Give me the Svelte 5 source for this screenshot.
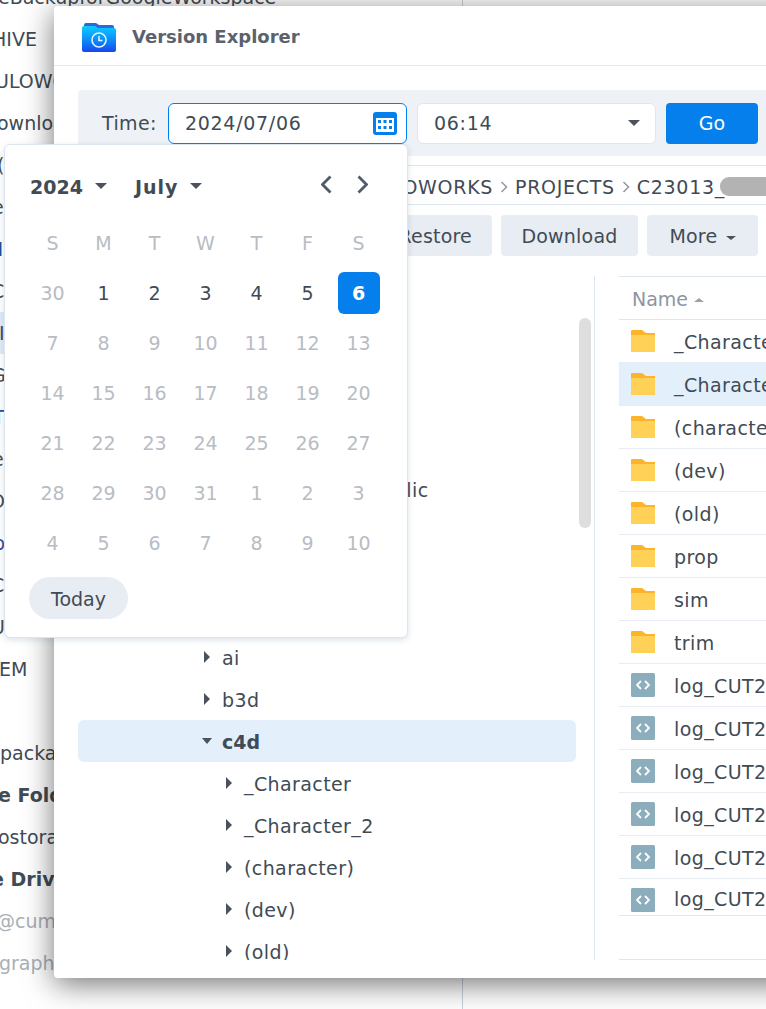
<script lang="ts">
	// behind-window list: only what shows left of the dialog is real text
	const behind = [
		{ t: 'eBackupforGoogleWorkspace', off: -2 },
		{ t: 'HIVE', off: -8 },
		{ t: 'ULOWORKS', off: -5 },
		{ t: 'ownloads', off: -3 },
		{ t: '(', off: -3 },
		{ t: 'e', off: -8 },
		{ t: 'N', off: -11, blue: true },
		{ t: 'C', off: -9 },
		{ t: 'I', off: -1, sel: true },
		{ t: 'G', off: -9 },
		{ t: 'T', off: -7, blue: true },
		{ t: 'e', off: -8 },
		{ t: 'O', off: -10 },
		{ t: 'b', off: -7, blue: true },
		{ t: 'C', off: -9 },
		{ t: 'U', off: -9 },
		{ t: 'EM', off: -1 },
		{ t: '', off: 0 },
		{ t: 'package', off: 0 },
		{ t: 'e Folder', off: -2, bold: true },
		{ t: 'ostorage', off: -2 },
		{ t: 'e Drive', off: -9, bold: true },
		{ t: '@cumulus', off: -4, muted: true },
		{ t: 'graphics', off: -1, muted: true }
	];

	const weekdays = ['S', 'M', 'T', 'W', 'T', 'F', 'S'];

	const days = [
		[30, 1, 2, 3, 4, 5, 6],
		[7, 8, 9, 10, 11, 12, 13],
		[14, 15, 16, 17, 18, 19, 20],
		[21, 22, 23, 24, 25, 26, 27],
		[28, 29, 30, 31, 1, 2, 3],
		[4, 5, 6, 7, 8, 9, 10]
	];

	const isActive = (row: number, col: number) => row === 0 && col > 0;

	// indent is measured from the tree panel's left edge
	const tree = [
		{ label: '', indent: 126 },
		{ label: '', indent: 126 },
		{ label: '', indent: 126 },
		{ label: '', indent: 126 },
		{ label: 'public', indent: 273, noArrow: true },
		{ label: '', indent: 126 },
		{ label: '', indent: 126 },
		{ label: '', indent: 126 },
		{ label: 'ai', indent: 126 },
		{ label: 'b3d', indent: 126 },
		{ label: 'c4d', indent: 126, open: true },
		{ label: '_Character', indent: 148 },
		{ label: '_Character_2', indent: 148 },
		{ label: '(character)', indent: 148 },
		{ label: '(dev)', indent: 148 },
		{ label: '(old)', indent: 148 }
	];

	const folders = ['_Character', '_Character_2', '(character)', '(dev)', '(old)', 'prop', 'sim', 'trim'];
	const logCount = 6;
</script>

<div class="desktop">
	<div class="behind">
		{#each behind as row}
			<div class="behind-row" class:sel={row.sel} class:bold={row.bold} class:muted={row.muted} class:blue={row.blue}>
				<span style="margin-left: {row.off}px">{row.t}</span>
			</div>
		{/each}
	</div>

	<section class="window">
		<header class="title-bar">
			<svg class="logo" width="34" height="32" viewBox="0 0 34 32" aria-hidden="true">
				<defs>
					<linearGradient id="folder-grad" x1="0" y1="0" x2="0" y2="1">
						<stop offset="0" stop-color="#0ccbff" />
						<stop offset="0.55" stop-color="#0a8cf8" />
						<stop offset="1" stop-color="#1a45ee" />
					</linearGradient>
				</defs>
				<path d="M2 4a2 2 0 0 1 2-2h10l3 2h13a2 2 0 0 1 2 2v4H2z" fill="#2a67e2" />
				<path d="M0 7a2 2 0 0 1 2-2h11l3 2h16a2 2 0 0 1 2 2v20a2 2 0 0 1-2 2H2a2 2 0 0 1-2-2z" fill="url(#folder-grad)" />
				<circle cx="17" cy="19" r="7" fill="none" stroke="#e4f4ff" stroke-width="1.6" />
				<path d="M17 15v4.5h3.5" fill="none" stroke="#e4f4ff" stroke-width="1.5" />
			</svg>
			<h1>Version Explorer</h1>
		</header>

		<div class="time-bar">
			<span class="time-label">Time:</span>
			<div class="field date-field">
				<span>2024/07/06</span>
				<svg width="24" height="23" viewBox="0 0 24 23" aria-hidden="true">
					<rect width="24" height="23" rx="3" fill="#057fec" />
					<rect x="3" y="6" width="18" height="14" fill="#fff" />
					<g fill="#057fec">
						<rect x="5" y="8" width="3" height="3" /><rect x="10.500" y="8" width="3" height="3" /><rect x="16" y="8" width="3" height="3" />
						<rect x="5" y="14" width="3" height="3" /><rect x="10.500" y="14" width="3" height="3" /><rect x="16" y="14" width="3" height="3" />
					</g>
				</svg>
			</div>
			<div class="field time-field">
				<span>06:14</span>
				<i class="caret big"></i>
			</div>
			<button class="go">Go</button>
		</div>

		<nav class="crumbs">
			<span>WORKFLOWORKS</span>
			<svg width="8" height="12" viewBox="0 0 8 12" aria-hidden="true"><path d="M1.500 1l5 5-5 5" fill="none" stroke="#8f98a3" stroke-width="1.500" /></svg>
			<span>PROJECTS</span>
			<svg width="8" height="12" viewBox="0 0 8 12" aria-hidden="true"><path d="M1.500 1l5 5-5 5" fill="none" stroke="#8f98a3" stroke-width="1.500" /></svg>
			<span>C23013_</span>
			<span class="scribble"></span>
		</nav>

		<div class="actions">
			<button>Restore</button>
			<button class="download">Download</button>
			<button class="more">More <i class="caret small"></i></button>
		</div>

		<div class="split">
			<div class="tree">
				{#each tree as node}
					<div class="tree-row" class:open={node.open} style="padding-left: {node.indent}px">
						{#if node.label && !node.noArrow}
							<i class="arrow"></i>
						{/if}
						<span>{node.label}</span>
					</div>
				{/each}
				<div class="scrollbar"></div>
			</div>

			<div class="table">
				<div class="thead">Name <i class="sort"></i></div>
				{#each folders as name, i}
					<div class="row" class:picked={i === 1}>
						<svg width="24" height="22" viewBox="0 0 24 22" aria-hidden="true">
							<path d="M0 1a1 1 0 0 1 1-1h10l4 3h9v4H0z" fill="#fdb32b" />
							<path d="M0 5h24v17H0z" fill="#ffd257" />
						</svg>
						<span>{name}</span>
					</div>
				{/each}
				{#each Array(logCount) as _}
					<div class="row log">
						<svg width="24" height="24" viewBox="0 0 24 24" aria-hidden="true">
							<rect width="24" height="24" rx="1.500" fill="#8badbc" />
							<path d="M10 8l-4 4 4 4M14 8l4 4-4 4" fill="none" stroke="#fff" stroke-width="1.800" />
						</svg>
						<span>log_CUT2</span>
					</div>
				{/each}
			</div>
		</div>
	</section>

	<div class="picker">
		<div class="picker-head">
			<span class="pick year">2024 <i class="caret big"></i></span>
			<span class="pick month">July <i class="caret big"></i></span>
			<div class="nav-arrows">
				<svg width="11" height="19" viewBox="0 0 11 19" aria-hidden="true"><path d="M9.500 1.500l-8 8 8 8" fill="none" stroke="#4f5b6a" stroke-width="2.800" /></svg>
				<svg width="11" height="19" viewBox="0 0 11 19" aria-hidden="true"><path d="M1.500 1.500l8 8-8 8" fill="none" stroke="#4f5b6a" stroke-width="2.800" /></svg>
			</div>
		</div>
		<div class="cal">
			{#each weekdays as d}
				<div class="cell">{d}</div>
			{/each}
			{#each days as week, r}
				{#each week as d, c}
					<div class="cell" class:active={isActive(r, c)}>
						{#if r === 0 && c === 6}
							<span class="chosen">{d}</span>
						{:else}
							{d}
						{/if}
					</div>
				{/each}
			{/each}
		</div>
		<button class="today">Today</button>
	</div>
</div>

<style>
	:global(body) {
		margin: 0;
		background: #fff;
	}

	.desktop {
		position: relative;
		width: 766px;
		height: 1009px;
		overflow: hidden;
		background: #fff;
		font-family: 'DejaVu Sans', 'Noto Sans', sans-serif;
		font-size: 19px;
		color: #414b55;
	}

	button {
		font: inherit;
		color: inherit;
		border: none;
		cursor: pointer;
	}

	.behind {
		width: 462px;
		border-right: 1px solid #c9d2dc;
		margin-top: -24px;
		height: 1033px;
		overflow: hidden;
	}

	.behind-row {
		height: 42px;
		line-height: 42px;
		white-space: nowrap;
	}

	.behind-row.sel {
		background: #dfeaf6;
	}

	.behind-row.bold {
		font-weight: 700;
	}

	.behind-row.muted {
		color: #a9afb7;
	}

	.behind-row.blue {
		color: #1f4f96;
	}

	.window {
		position: absolute;
		left: 54px;
		top: 6px;
		width: 752px;
		height: 972px;
		background: #fff;
		border-radius: 4px;
		box-shadow: 0 6px 30px rgba(0, 0, 0, 0.55);
		overflow: hidden;
	}

	.title-bar {
		display: flex;
		align-items: center;
		gap: 16px;
		height: 59px;
		padding-left: 28px;
		border-bottom: 1px solid #e6e8eb;
	}

	.logo {
		margin-top: 2px;
	}

	h1 {
		margin: 2px 0 0;
		font-size: 18px;
		font-weight: 700;
		color: #5a626e;
	}

	.time-bar {
		display: flex;
		align-items: center;
		height: 66px;
		margin: 24px 24px 0;
		padding: 0 24px;
		background: #eef1f5;
		border-radius: 4px 4px 0 0;
		box-sizing: border-box;
	}

	.time-label {
		width: 66px;
		flex-shrink: 0;
		letter-spacing: 0.4px;
	}

	.field {
		display: flex;
		align-items: center;
		justify-content: space-between;
		box-sizing: border-box;
		width: 239px;
		height: 41px;
		padding: 0 9px 0 16px;
		background: #fff;
		border: 1px solid #dfe6ee;
		border-radius: 6px;
		letter-spacing: 0.7px;
	}

	.date-field {
		border-color: #057fec;
	}

	.time-field {
		margin-left: 10px;
		padding-right: 15px;
	}

	.go {
		width: 92px;
		height: 41px;
		margin-left: 10px;
		background: #057fec;
		color: #fff;
		border-radius: 4px;
		font-weight: 500;
	}

	.caret {
		display: inline-block;
		width: 0;
		height: 0;
		border-style: solid;
		border-color: #4a525e transparent transparent;
	}

	.caret.big {
		border-width: 6px 6.5px 0;
		vertical-align: 4px;
	}

	.caret.small {
		border-width: 4px 5px 0;
		vertical-align: 3px;
		margin-left: 2px;
	}

	.crumbs {
		display: flex;
		align-items: center;
		gap: 7px;
		box-sizing: border-box;
		height: 40px;
		margin: 9px 0 0 24px;
		padding: 3px 0 0 240px;
		border-top: 1px solid #dde5ee;
		border-bottom: 1px solid #dde5ee;
		white-space: nowrap;
		letter-spacing: 0.7px;
	}

	.scribble {
		width: 60px;
		height: 19px;
		margin-left: -12px;
		background: #b3b3b3;
		border-radius: 9px;
	}

	.actions {
		display: flex;
		justify-content: flex-end;
		gap: 9px;
		width: 704px;
		margin-top: 10px;
	}

	.actions button {
		height: 41px;
		padding: 0 20px;
		background: #e8ecf3;
		border-radius: 4px;
		white-space: nowrap;
		letter-spacing: 0.2px;
	}

	.actions .download {
		width: 137px;
		padding: 0;
	}

	.actions .more {
		width: 111px;
		padding: 0;
	}

	.split {
		display: flex;
		gap: 24px;
		height: 684px;
		margin: 20px 0 0 24px;
	}

	.tree {
		position: relative;
		flex: 0 0 517px;
		box-sizing: border-box;
		padding-top: 24px;
		border-right: 1px solid #dde5ee;
		overflow: hidden;
		letter-spacing: 0.4px;
	}

	.tree-row {
		position: relative;
		box-sizing: border-box;
		width: 498px;
		height: 42px;
		display: flex;
		align-items: center;
		border-radius: 6px;
		white-space: nowrap;
	}

	.tree-row span {
		margin: 2px 0 0 18px;
	}

	.tree-row.open {
		background: #e3f0fc;
		font-weight: 700;
		letter-spacing: 0;
	}

	.arrow {
		position: absolute;
		margin-left: 0;
		width: 0;
		height: 0;
		border-style: solid;
		border-width: 6px 0 6px 6px;
		border-color: transparent transparent transparent #4a525e;
	}

	.tree-row.open .arrow {
		margin-left: -2px;
		border-width: 6px 5.500px 0;
		border-color: #4a525e transparent transparent;
	}

	.scrollbar {
		position: absolute;
		left: 501px;
		top: 42px;
		width: 12px;
		height: 210px;
		background: #dedede;
		border-radius: 6px;
	}

	.table {
		flex: 1;
		box-sizing: border-box;
		height: 684px;
		border-top: 1px solid #dfe6ee;
		border-bottom: 1px solid #dde5ee;
		overflow: hidden;
		letter-spacing: 0.4px;
	}

	.thead {
		box-sizing: border-box;
		height: 43px;
		padding-left: 13px;
		line-height: 44px;
		border-bottom: 1px solid #dfe6ee;
		color: #8c95a2;
		white-space: nowrap;
		letter-spacing: 0;
	}

	.sort {
		display: inline-block;
		width: 0;
		height: 0;
		border-style: solid;
		border-width: 0 5px 4px;
		border-color: transparent transparent #9aa2ad;
		vertical-align: 4px;
	}

	.row {
		display: flex;
		align-items: center;
		gap: 19px;
		box-sizing: border-box;
		height: 43px;
		padding-left: 12px;
		border-bottom: 1px solid #e8edf3;
		white-space: nowrap;
	}

	.row span {
		margin-top: 2px;
	}

	.row.picked {
		background: #e3f0fc;
	}

	.row:last-child {
		height: 37px;
		border-bottom-color: #dfe9f3;
		align-items: flex-start;
		padding-top: 9px;
	}

	.row:last-child span {
		margin-top: 0;
	}

	.picker {
		position: absolute;
		left: 4px;
		top: 144px;
		box-sizing: border-box;
		width: 404px;
		height: 494px;
		padding: 0 0 0 22px;
		background: #fff;
		border: 1px solid #dde6ef;
		border-radius: 6px;
		box-shadow: 0 2px 6px rgba(60, 90, 130, 0.18);
	}

	.picker-head {
		display: flex;
		align-items: center;
		height: 73px;
		padding: 11px 0 0 3px;
		box-sizing: border-box;
		font-weight: 700;
	}

	.pick {
		display: inline-flex;
		align-items: center;
		gap: 12px;
		white-space: nowrap;
	}

	.pick .caret {
		vertical-align: 0;
		margin-top: -3px;
	}

	.year {
		margin-right: 28px;
	}

	.month {
		letter-spacing: 1px;
	}

	.nav-arrows {
		display: flex;
		gap: 25px;
		margin-left: auto;
		margin-right: 39px;
		margin-top: -6px;
	}

	.cal {
		display: grid;
		grid-template-columns: repeat(7, 51px);
		grid-auto-rows: 50px;
		color: #b8bcc3;
	}

	.cell {
		display: flex;
		align-items: center;
		justify-content: center;
	}

	.cell.active {
		color: #414b55;
	}

	.chosen {
		display: flex;
		align-items: center;
		justify-content: center;
		width: 42px;
		height: 42px;
		background: #057fec;
		border-radius: 6px;
		color: #fff;
		font-weight: 700;
	}

	.today {
		display: block;
		width: 99px;
		height: 42px;
		margin: 9px 0 0 2px;
		padding-top: 2px;
		background: #e8edf3;
		border-radius: 21px;
	}
</style>
